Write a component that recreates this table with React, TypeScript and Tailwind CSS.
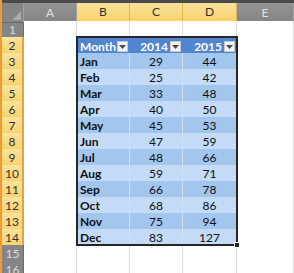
import React from 'react';

const data = [
  ['Jan', 29, 44],
  ['Feb', 25, 42],
  ['Mar', 33, 48],
  ['Apr', 40, 50],
  ['May', 45, 53],
  ['Jun', 47, 59],
  ['Jul', 48, 66],
  ['Aug', 59, 71],
  ['Sep', 66, 78],
  ['Oct', 68, 86],
  ['Nov', 75, 94],
  ['Dec', 83, 127],
];

function Dropdown() {
  return (
    <span className="flex h-[11px] w-[11px] items-center justify-center border border-[#c8c8c8] bg-[#f4f4f4]">
      <svg width="7" height="4" viewBox="0 0 7 4">
        <path d="M0 0h7L3.5 4z" fill="#4a4a4a" />
      </svg>
    </span>
  );
}

function RowHead({ n, active }: { n: number; active: boolean }) {
  return (
    <div
      className={
        active
          ? 'flex items-center justify-center border-b border-r-2 border-b-[#e9c25a] border-r-[#f0a030] bg-gradient-to-b from-[#fbe39a] to-[#f7d26c] text-[12px] text-[#303030]'
          : 'flex items-center justify-center border-b border-r border-b-[#9a9a9a] border-r-[#6a6a6a] bg-[#858585] text-[12px] text-[#dedede]'
      }
    >
      {n}
    </div>
  );
}

function ColHead({ label, active }: { label: string; active: boolean }) {
  return (
    <div
      className={
        active
          ? 'flex items-center justify-center border-r border-b-2 border-r-[#e2b850] border-b-[#f0a030] bg-gradient-to-b from-[#fbe29a] to-[#f7d26c] text-[12px] text-[#303030]'
          : 'flex items-center justify-center border-r border-b border-r-[#a0a0a0] border-b-[#6a6a6a] bg-gradient-to-b from-[#959595] to-[#838383] text-[12px] text-[#e2e2e2]'
      }
    >
      {label}
    </div>
  );
}

const blank = 'border-b border-r border-[#dadcdd] bg-white';

export default function App() {
  return (
    <div className="relative h-[273px] w-[294px] overflow-hidden border-l-2 border-[#f39a2c] bg-white font-['Lato',sans-serif]">
      <div className="h-[3px] bg-[#4a4a4a]" />

      {/* column headers */}
      <div className="grid h-[18px] grid-cols-[22px_53px_53px_53px_54px_57px]">
        <div className="relative border-r border-b border-r-[#a0a0a0] border-b-[#6a6a6a] bg-[#858585]">
          <svg className="absolute bottom-[2px] right-[2px]" width="9" height="9" viewBox="0 0 9 9">
            <path d="M9 0v9H0z" fill="#a9a9a9" />
          </svg>
        </div>
        <ColHead label="A" active={false} />
        <ColHead label="B" active />
        <ColHead label="C" active />
        <ColHead label="D" active />
        <ColHead label="E" active={false} />
      </div>

      {/* row 1 */}
      <div className="grid h-[16px] grid-cols-[22px_53px_53px_53px_54px_57px]">
        <RowHead n={1} active={false} />
        <div className={blank} />
        <div className={blank} />
        <div className={blank} />
        <div className={blank} />
        <div className={blank} />
      </div>

      {/* row 2: table header */}
      <div className="grid h-[16px] grid-cols-[22px_53px_53px_53px_54px_57px]">
        <RowHead n={2} active />
        <div className={blank} />
        <div className="flex items-center justify-between bg-[#4f86cf] pl-[3px] pr-[2px] text-[12px] font-bold text-white">
          <span>Month</span>
          <Dropdown />
        </div>
        <div className="flex items-center justify-end gap-[2px] bg-[#4f86cf] pr-[2px] text-[12px] font-bold text-white">
          <span>2014</span>
          <Dropdown />
        </div>
        <div className="flex items-center justify-end gap-[2px] bg-[#4f86cf] pr-[2px] text-[12px] font-bold text-white">
          <span>2015</span>
          <Dropdown />
        </div>
        <div className={blank} />
      </div>

      {/* data rows */}
      {data.map(([m, a, b], i) => {
        const band = i % 2 === 0 ? 'bg-[#a3c6ee]' : 'bg-[#c3dbf6]';
        return (
          <div key={m} className="grid h-[16px] grid-cols-[22px_53px_53px_53px_54px_57px]">
            <RowHead n={i + 3} active />
            <div className={blank} />
            <div className={`flex items-center border-r border-b border-[#cfe0f5] pl-[3px] text-[12px] font-bold text-[#111] ${band}`}>
              {m}
            </div>
            <div className={`flex items-center justify-center border-r border-b border-[#cfe0f5] text-[12px] text-[#111] ${band}`}>
              {a}
            </div>
            <div className={`flex items-center justify-center border-r border-b border-[#cfe0f5] text-[12px] text-[#111] ${band}`}>
              {b}
            </div>
            <div className={blank} />
          </div>
        );
      })}

      {/* rows 15, 16 */}
      {[15, 16].map((n) => (
        <div key={n} className="grid h-[16px] grid-cols-[22px_53px_53px_53px_54px_57px]">
          <RowHead n={n} active={false} />
          <div className={blank} />
          <div className={blank} />
          <div className={blank} />
          <div className={blank} />
          <div className={blank} />
        </div>
      ))}

      {/* selection outline */}
      <div className="pointer-events-none absolute left-[74px] top-[36px] h-[210px] w-[162px] border-2 border-[#262626]" />
      <div className="pointer-events-none absolute left-[232px] top-[242px] h-[6px] w-[6px] border border-white bg-[#262626]" />
    </div>
  );
}
